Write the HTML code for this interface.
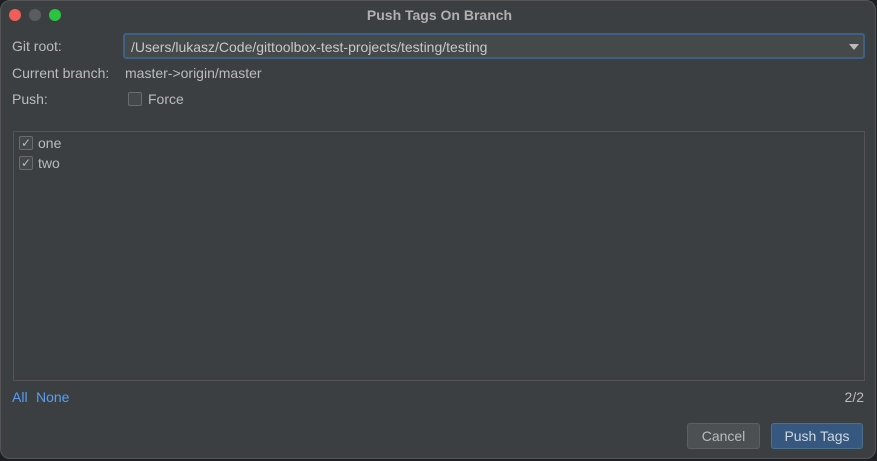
<!DOCTYPE html>
<html><head><style>
body{margin:0;width:877px;height:461px;background:#1e1f22;overflow:hidden;font-family:"Liberation Sans",sans-serif;font-size:14px;color:#bbbbbb}
.win{position:absolute;left:0;top:0;width:876px;height:459px;background:#3c3f41;border-radius:10px;border:1px solid #555;box-sizing:border-box}
.title{position:absolute;top:6px;left:0;width:877px;text-align:center;font-weight:bold;color:#b0b0b0;font-size:14px}
.dot{position:absolute;top:8px;width:12px;height:12px;border-radius:50%}
.lbl{position:absolute;left:11px}
.combo{position:absolute;left:122px;top:32px;width:742px;height:26px;border:2px solid #3d6185;border-radius:3px;background:#45494a;box-sizing:border-box}
.combo span{position:absolute;left:6px;top:4px;color:#c8c8c8}
.arrow{position:absolute;right:4px;top:9px;border-left:5px solid transparent;border-right:5px solid transparent;border-top:6px solid #bbb}
.cb{position:absolute;width:12px;height:12px;border:1px solid #6b6b6b;border-radius:2px;background:#43494a}
.list{position:absolute;left:12px;top:130px;width:852px;height:250px;border:1px solid #555;background:#3c3f41;box-sizing:border-box}
.btn{position:absolute;top:422px;height:26px;border-radius:3px;text-align:center;line-height:25px;font-size:14px;box-sizing:border-box}
</style></head><body>
<div class="win">
<div class="dot" style="left:8px;background:#ed5f57"></div>
<div class="dot" style="left:28px;background:#5a5c5e"></div>
<div class="dot" style="left:48px;background:#2ac440"></div>
<div class="title">Push Tags On Branch</div>
<div class="lbl" style="top:37px">Git root:</div>
<div class="combo"><span>/Users/lukasz/Code/gittoolbox-test-projects/testing/testing</span><div class="arrow"></div></div>
<div class="lbl" style="top:64px">Current branch:</div>
<div style="position:absolute;left:124px;top:64px">master-&gt;origin/master</div>
<div class="lbl" style="top:90px">Push:</div>
<div class="cb" style="left:127px;top:91px"></div>
<div style="position:absolute;left:147px;top:90px">Force</div>
<div class="list">
<div class="cb" style="left:5px;top:4px;font-size:12px;line-height:12px;text-align:center">✓</div>
<div style="position:absolute;left:24px;top:3px">one</div>
<div class="cb" style="left:5px;top:24px;font-size:12px;line-height:12px;text-align:center">✓</div>
<div style="position:absolute;left:24px;top:23px">two</div>
</div>
<div style="position:absolute;left:11px;top:388px;color:#589df6">All</div>
<div style="position:absolute;left:35px;top:388px;color:#589df6">None</div>
<div style="position:absolute;right:11px;top:388px">2/2</div>
<div class="btn" style="left:686px;width:73px;background:#4c5052;border:1px solid #5e6060">Cancel</div>
<div class="btn" style="left:770px;width:92px;background:#365880;border:1px solid #4c708c;color:#cfd8e0">Push Tags</div>
</div>
</body></html>
